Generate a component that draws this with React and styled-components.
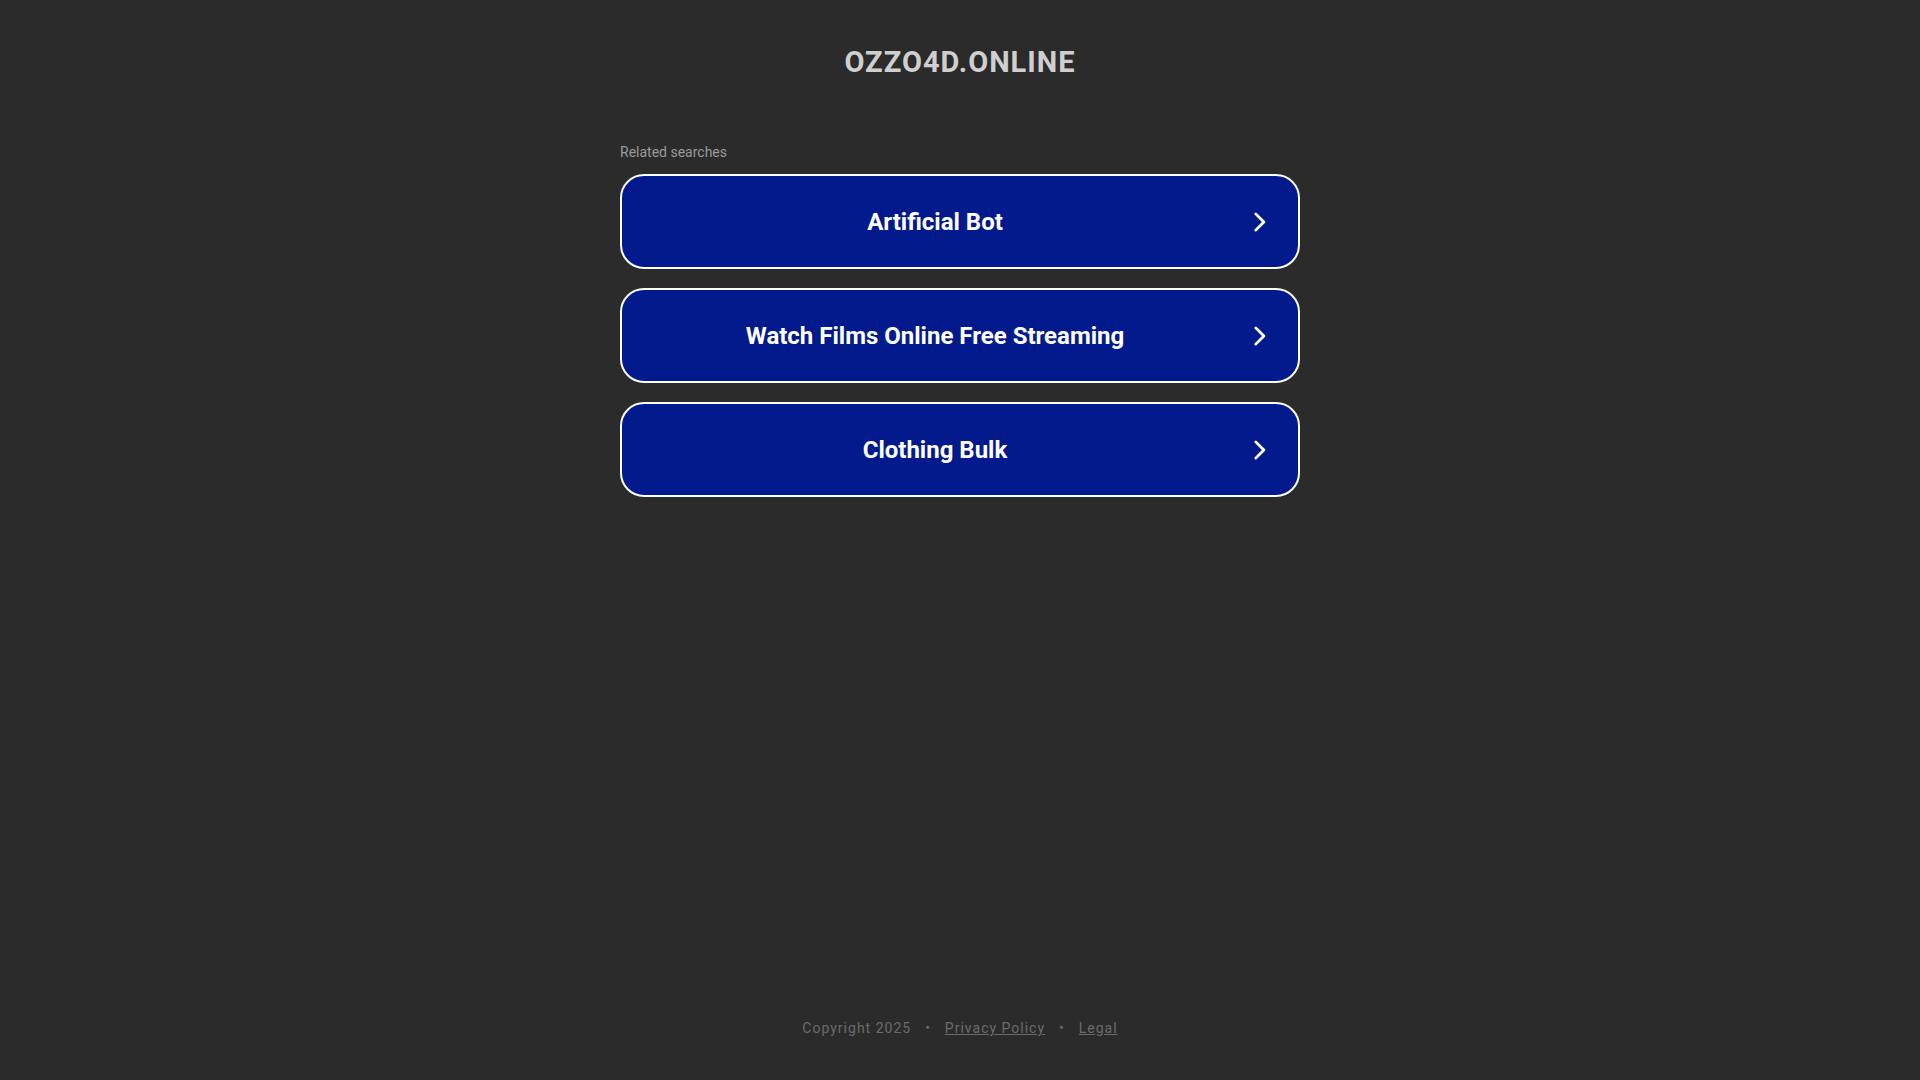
import styled, { createGlobalStyle } from "styled-components"

const Global = createGlobalStyle`
html, body {
  margin: 0;
  padding: 0;
  background-color: #2b2b2b;
  font-family: Roboto, "Liberation Sans", sans-serif;
}
`;

const Page = styled.div`
min-height: 1080px;
display: flex;
flex-direction: column;
align-items: center;
`;

const Domain = styled.h1`
margin: 44px 0 0;
font-size: 29px;
font-weight: 700;
letter-spacing: 1px;
line-height: 36px;
color: #cfcfcf;
`;

const Content = styled.div`
width: 680px;
margin-top: 64px;
flex: 1;
`;

const Label = styled.div`
font-size: 14px;
color: #9a9a9a;
line-height: 16px;
margin-bottom: 14px;
`;

const List = styled.div`
display: flex;
flex-direction: column;
gap: 19px;
`;

const Item = styled.a`
box-sizing: border-box;
height: 95px;
display: flex;
align-items: center;
justify-content: center;
position: relative;
padding-right: 50px;
background-color: #021a8b;
border: 2px solid #ffffff;
border-radius: 24px;
color: #ffffff;
font-size: 24px;
font-weight: 700;
text-decoration: none;
cursor: pointer;
`;

const Arrow = styled.svg`
position: absolute;
right: 26px;
top: 50%;
margin-top: -13px;
`;

const Footer = styled.footer`
display: flex;
gap: 14px;
justify-content: center;
font-size: 14px;
letter-spacing: 1px;
color: #6b6b6b;
padding-bottom: 44px;
line-height: 16px;
`;

const FooterLink = styled.a`
color: #6b6b6b;
text-decoration: underline;
`;

const searches = ["Artificial Bot", "Watch Films Online Free Streaming", "Clothing Bulk"];

const App = () => {
  return (
    <Page>
      <Global />
      <Domain>OZZO4D.ONLINE</Domain>
      <Content>
        <Label>Related searches</Label>
        <List>
          {searches.map((s) => (
            <Item key={s}>
              {s}
              <Arrow width="26" height="26" viewBox="0 0 24 24" fill="none" stroke="#fff" strokeWidth="2.6" strokeLinecap="round" strokeLinejoin="round">
                <path d="M9 4.5l7.5 7.5L9 19.5" />
              </Arrow>
            </Item>
          ))}
        </List>
      </Content>
      <Footer>
        <span>Copyright 2025</span>
        <span>•</span>
        <FooterLink>Privacy Policy</FooterLink>
        <span>•</span>
        <FooterLink>Legal</FooterLink>
      </Footer>
    </Page>
  )
}

export default App
